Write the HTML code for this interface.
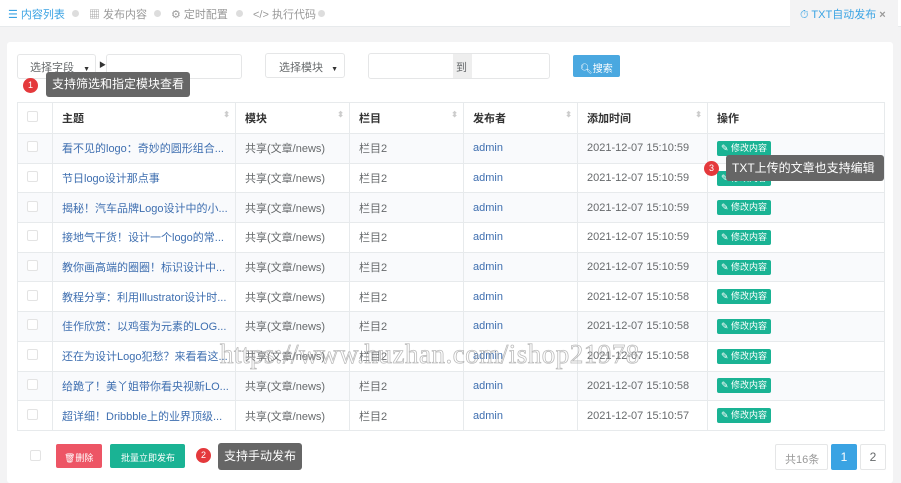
<!DOCTYPE html>
<html><head><meta charset="utf-8"><style>
*{box-sizing:border-box;margin:0;padding:0}
body{width:901px;height:483px;overflow:hidden;background:#f3f3f4;font-family:"Liberation Sans","Noto Sans CJK SC",sans-serif;font-size:11px;color:#676a6c;position:relative}
.nav{position:absolute;left:0;top:0;width:901px;height:27px;background:#fff;border-bottom:1px solid #e7eaec}
.nav span{position:absolute;top:6px;font-size:11px;color:#999}
.dot{display:inline-block;width:7px;height:7px;border-radius:50%;background:#ddd;position:absolute;top:10px}
.card{position:absolute;left:7px;top:42px;width:886px;height:441px;background:#fff;border-radius:3px}
.a{position:absolute}
.box{position:absolute;border:1px solid #e5e6e7;border-radius:3px;background:#fff}
table{position:absolute;left:17px;top:102px;width:868px;border-collapse:collapse;border:1px solid #e7eaec;font-size:11px}
td,th{height:29.7px;border-bottom:1px solid #e7eaec;border-right:1px solid #e7eaec;text-align:left;padding-left:9px;white-space:nowrap;overflow:hidden}
th{height:31px;color:#333;font-weight:bold;background:#fff}
tr:nth-child(even) td{background:#f9fafc}
td.t{color:#3f6fb0}
td.u{color:#3f6fb0}
.cb{display:inline-block;width:11px;height:11px;border:1px solid #e3e3e3;border-radius:2px;background:#fff}
.btn{display:inline-block;background:#1ab394;color:#fff;font-size:9px;padding:2px 4px;border-radius:2px;line-height:11px}
.tip{position:absolute;background:#666;color:#fff;font-size:12px;border-radius:3px;padding:0 6px}
.badge{position:absolute;width:15px;height:15px;border-radius:50%;background:#e4393c;color:#fff;font-size:9px;text-align:center;line-height:15px}
.sort{float:right;margin-right:5px;color:#ccc;font-size:8px}
.wm{position:absolute;left:220px;top:339px;font-family:"Liberation Serif",serif;font-size:27px;color:transparent;-webkit-text-stroke:0.8px rgba(160,160,160,.7);white-space:nowrap;letter-spacing:0.5px}
</style></head><body>
<div class="nav">
<span style="left:8px;color:#3aa3e3">☰ 内容列表</span><i class="dot" style="left:72px"></i>
<span style="left:89px">▦ 发布内容</span><i class="dot" style="left:154px"></i>
<span style="left:171px">⚙ 定时配置</span><i class="dot" style="left:236px"></i>
<span style="left:253px">&lt;/&gt; 执行代码</span><i class="dot" style="left:318px"></i>
<div class="a" style="left:790px;top:0;width:108px;height:27px;background:#f3f3f4"></div>
<span style="left:800px;color:#3aa3e3">⏱ TXT自动发布 <b style="color:#999">×</b></span>
</div>
<div class="card"></div>
<div class="box" style="left:17px;top:54px;width:79px;height:25px;padding:4px 0 0 12px">选择字段 <span style="font-size:7px;color:#333;margin-left:6px">▼</span></div>
<div class="a" style="left:99px;top:60px;font-size:7px;color:#333">▶</div>
<div class="box" style="left:106px;top:54px;width:136px;height:25px"></div>
<div class="box" style="left:265px;top:53px;width:80px;height:25px;padding:5px 0 0 13px">选择模块 <span style="font-size:7px;color:#333;margin-left:5px">▼</span></div>
<div class="box" style="left:368px;top:53px;width:182px;height:26px"></div>
<div class="a" style="left:453px;top:54px;width:19px;height:24px;background:#eee;padding:5px 0 0 3px">到</div>
<div class="a" style="left:573px;top:55px;width:47px;height:22px;background:#4aa8e0;border-radius:2px;color:#fff;font-size:10px;padding:5px 0 0 7px">🔍︎搜索</div>
<div class="badge" style="left:23px;top:78px">1</div>
<div class="tip" style="left:46px;top:72px;height:25px;line-height:25px">支持筛选和指定模块查看</div>
<table>
<tr><th style="width:35px"><span class="cb"></span></th><th style="width:183px">主题<span class="sort">⬍</span></th><th style="width:114px">模块<span class="sort">⬍</span></th><th style="width:114px">栏目<span class="sort">⬍</span></th><th style="width:114px">发布者<span class="sort">⬍</span></th><th style="width:130px">添加时间<span class="sort">⬍</span></th><th>操作</th></tr>
<tr><td><span class="cb"></span></td><td class="t">看不见的logo：奇妙的圆形组合...</td><td>共享(文章/news)</td><td>栏目2</td><td class="u">admin</td><td>2021-12-07 15:10:59</td><td><span class="btn">✎ 修改内容</span></td></tr>
<tr><td><span class="cb"></span></td><td class="t">节日logo设计那点事</td><td>共享(文章/news)</td><td>栏目2</td><td class="u">admin</td><td>2021-12-07 15:10:59</td><td><span class="btn">✎ 修改内容</span></td></tr>
<tr><td><span class="cb"></span></td><td class="t">揭秘！汽车品牌Logo设计中的小...</td><td>共享(文章/news)</td><td>栏目2</td><td class="u">admin</td><td>2021-12-07 15:10:59</td><td><span class="btn">✎ 修改内容</span></td></tr>
<tr><td><span class="cb"></span></td><td class="t">接地气干货！设计一个logo的常...</td><td>共享(文章/news)</td><td>栏目2</td><td class="u">admin</td><td>2021-12-07 15:10:59</td><td><span class="btn">✎ 修改内容</span></td></tr>
<tr><td><span class="cb"></span></td><td class="t">教你画高端的圈圈！标识设计中...</td><td>共享(文章/news)</td><td>栏目2</td><td class="u">admin</td><td>2021-12-07 15:10:59</td><td><span class="btn">✎ 修改内容</span></td></tr>
<tr><td><span class="cb"></span></td><td class="t">教程分享：利用Illustrator设计时...</td><td>共享(文章/news)</td><td>栏目2</td><td class="u">admin</td><td>2021-12-07 15:10:58</td><td><span class="btn">✎ 修改内容</span></td></tr>
<tr><td><span class="cb"></span></td><td class="t">佳作欣赏：以鸡蛋为元素的LOG...</td><td>共享(文章/news)</td><td>栏目2</td><td class="u">admin</td><td>2021-12-07 15:10:58</td><td><span class="btn">✎ 修改内容</span></td></tr>
<tr><td><span class="cb"></span></td><td class="t">还在为设计Logo犯愁？来看看这...</td><td>共享(文章/news)</td><td>栏目2</td><td class="u">admin</td><td>2021-12-07 15:10:58</td><td><span class="btn">✎ 修改内容</span></td></tr>
<tr><td><span class="cb"></span></td><td class="t">给跪了！美丫姐带你看央视新LO...</td><td>共享(文章/news)</td><td>栏目2</td><td class="u">admin</td><td>2021-12-07 15:10:58</td><td><span class="btn">✎ 修改内容</span></td></tr>
<tr><td><span class="cb"></span></td><td class="t">超详细！Dribbble上的业界顶级...</td><td>共享(文章/news)</td><td>栏目2</td><td class="u">admin</td><td>2021-12-07 15:10:57</td><td><span class="btn">✎ 修改内容</span></td></tr>
</table>
<div class="wm">https://www.huzhan.com/ishop21978</div>
<div class="badge" style="left:704px;top:161px">3</div>
<div class="tip" style="left:726px;top:155px;height:26px;line-height:26px;width:158px">TXT上传的文章也支持编辑</div>
<span class="cb a" style="left:30px;top:450px"></span>
<div class="a" style="left:56px;top:444px;width:46px;height:24px;background:#ed5565;border-radius:2px;color:#fff;font-size:9px;padding:7px 0 0 8px">🗑删除</div>
<div class="a" style="left:110px;top:444px;width:75px;height:24px;background:#1ab394;border-radius:2px;color:#fff;font-size:9px;padding:7px 0 0 11px">批量立即发布</div>
<div class="badge" style="left:196px;top:448px">2</div>
<div class="tip" style="left:218px;top:443px;height:27px;line-height:27px">支持手动发布</div>
<div class="box" style="left:775px;top:444px;width:53px;height:26px;border-radius:2px;padding:6px 0 0 9px;color:#999">共16条</div>
<div class="a" style="left:831px;top:444px;width:26px;height:26px;background:#3aa3e3;border-radius:2px;color:#fff;text-align:center;line-height:26px;font-size:12px">1</div>
<div class="box" style="left:860px;top:444px;width:26px;height:26px;border-radius:2px;text-align:center;line-height:24px;font-size:12px">2</div>
</body></html>
